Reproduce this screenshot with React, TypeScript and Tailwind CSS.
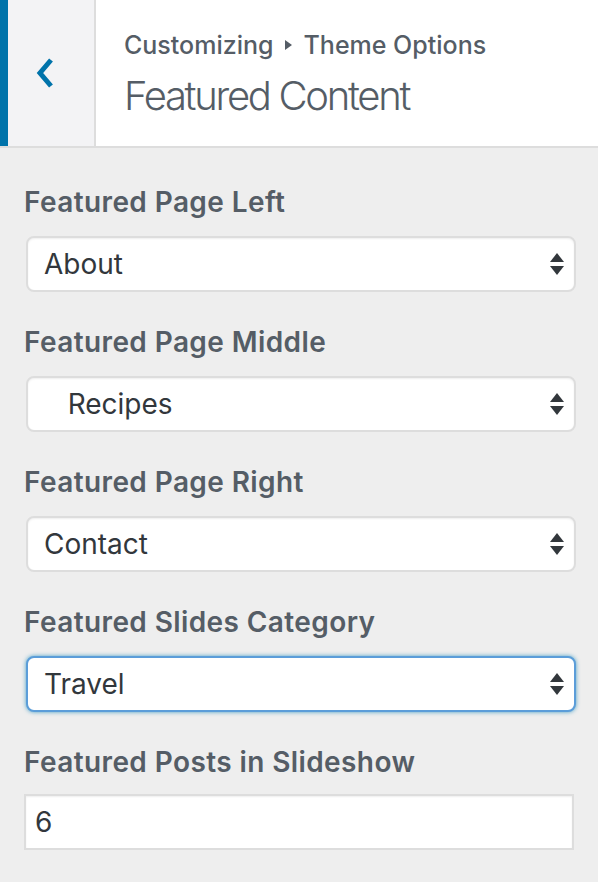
import React from "react";

const font = { fontFamily: "Inter, 'Open Sans', 'Liberation Sans', sans-serif" };

function Arrows() {
  return (
    <svg width="14" height="22" viewBox="0 0 14 22" className="shrink-0">
      <path d="M7 0 L14 9 L0 9 Z" fill="#32373c" />
      <path d="M0 13 L14 13 L7 22 Z" fill="#32373c" />
    </svg>
  );
}

function SelectBox({ value, focused }: { value: string; focused?: boolean }) {
  return (
    <div
      className={
        "ml-[2px] w-[550px] h-[56px] flex items-center justify-between pl-[16px] pr-[10px] bg-white rounded-[8px] border-2 " +
        (focused
          ? "border-[#5b9dd9] shadow-[0_0_4px_rgba(30,140,190,0.8)]"
          : "border-[#dddddd] shadow-[inset_0_1px_2px_rgba(0,0,0,0.07)]")
      }
    >
      <span className="text-[28px] text-[#32373c] whitespace-pre">{value}</span>
      <Arrows />
    </div>
  );
}

function Field({ label, children, mb }: { label: string; children: React.ReactNode; mb: string }) {
  return (
    <div className="flex flex-col">
      <label className={"text-[28px] leading-[40px] font-semibold tracking-[0.4px] text-[#555d66] " + mb}>{label}</label>
      {children}
    </div>
  );
}

export default function App() {
  return (
    <div className="w-[598px] h-[882px] bg-[#eeeeee] overflow-hidden" style={font}>
      <header className="flex h-[148px] bg-white border-b-2 border-[#dddddd]">
        <div className="w-[8px] bg-[#0073aa]" />
        <button className="w-[88px] bg-[#f3f3f5] border-r-2 border-[#dddddd] flex items-center pl-[28px]">
          <svg width="20" height="32" viewBox="0 0 20 32">
            <path d="M15 3 L4 16 L15 29" fill="none" stroke="#0073aa" strokeWidth="5" />
          </svg>
        </button>
        <div className="pl-[28px] pt-[27px]">
          <div className="flex items-center text-[25px] leading-[36px] font-medium text-[#555d66]">
            <span>Customizing</span>
            <svg width="10" height="12" viewBox="0 0 10 12" className="mx-[10px]">
              <path d="M1 1 L8 6 L1 11 Z" fill="#555d66" />
            </svg>
            <span>Theme Options</span>
          </div>
          <h1 className="mt-[5px] text-[40px] leading-[56px] font-light text-[#555d66] tracking-[-2.3px]">
            Featured Content
          </h1>
        </div>
      </header>
      <main className="px-[24px] pt-[34px] flex flex-col gap-[30px]">
        <Field label="Featured Page Left" mb="mb-[14px]">
          <SelectBox value="About" />
        </Field>
        <Field label="Featured Page Middle" mb="mb-[14px]">
          <SelectBox value={"\u00a0\u00a0\u00a0Recipes"} />
        </Field>
        <Field label="Featured Page Right" mb="mb-[14px]">
          <SelectBox value="Contact" />
        </Field>
        <Field label="Featured Slides Category" mb="mb-[14px]">
          <SelectBox value="Travel" focused />
        </Field>
        <Field label="Featured Posts in Slideshow" mb="mb-[12px]">
          <div className="w-[550px] h-[56px] flex items-center pl-[9px] bg-white border-2 border-[#dddddd] shadow-[inset_0_1px_2px_rgba(0,0,0,0.07)]">
            <span className="text-[28px] text-[#32373c]">6</span>
          </div>
        </Field>
      </main>
    </div>
  );
}
